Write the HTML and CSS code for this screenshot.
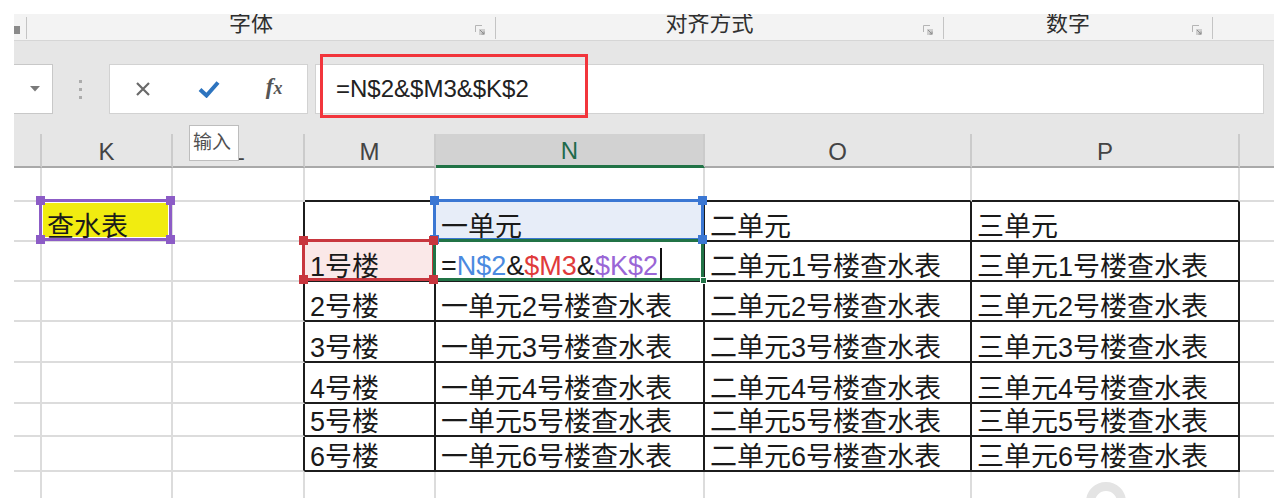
FILE: index.html
```html
<!DOCTYPE html>
<html lang="zh-CN">
<head>
<meta charset="utf-8">
<title>Excel</title>
<link rel="stylesheet" href="styles.css">
</head>
<body>
<div class="app">
  <div class="ribbon">
    <div class="rg g0">
      <span class="mini"></span>
      <span class="sep"></span>
    </div>
    <div class="rg g1">
      <span class="rlabel">字体</span>
      <svg class="launch" viewBox="0 0 10 10" width="10" height="10"><path d="M0.5 7V0.5H7" fill="none" stroke="#b5b5b5"/><rect x="4" y="4" width="6" height="6" fill="#cfcfcf"/><path d="M5 5l4 4M9 6.5V9H6.5" fill="none" stroke="#8e8e8e"/></svg>
      <span class="sep"></span>
    </div>
    <div class="rg g2">
      <span class="rlabel">对齐方式</span>
      <svg class="launch" viewBox="0 0 10 10" width="10" height="10"><path d="M0.5 7V0.5H7" fill="none" stroke="#b5b5b5"/><rect x="4" y="4" width="6" height="6" fill="#cfcfcf"/><path d="M5 5l4 4M9 6.5V9H6.5" fill="none" stroke="#8e8e8e"/></svg>
      <span class="sep"></span>
    </div>
    <div class="rg g3">
      <span class="rlabel">数字</span>
      <svg class="launch" viewBox="0 0 10 10" width="10" height="10"><path d="M0.5 7V0.5H7" fill="none" stroke="#b5b5b5"/><rect x="4" y="4" width="6" height="6" fill="#cfcfcf"/><path d="M5 5l4 4M9 6.5V9H6.5" fill="none" stroke="#8e8e8e"/></svg>
      <span class="sep"></span>
    </div>
  </div>

  <div class="fbar">
    <div class="namebox">
      <svg viewBox="0 0 10 6" width="10" height="6"><path d="M0 0h10L5 5.5z" fill="#7a7a7a"/></svg>
    </div>
    <div class="grip"><i></i><i></i><i></i></div>
    <div class="fbtns">
      <span class="slot">
        <svg viewBox="0 0 16 16" width="16" height="16"><path d="M2 2L14 14M14 2L2 14" stroke="#6a6a6a" stroke-width="2.2" fill="none"/></svg>
      </span>
      <span class="slot">
        <svg viewBox="0 0 22 18" width="22" height="18"><path d="M2 9.5L8.5 15.5L20 2.5" stroke="#2d74bf" stroke-width="4" fill="none"/></svg>
      </span>
      <span class="slot fx">f<span class="fxx">x</span></span>
    </div>
    <div class="finput">=N$2&amp;$M3&amp;$K$2</div>
  </div>

  <div class="hdr">
    <div class="hc"></div>
    <div class="hc">K</div>
    <div class="hc">L</div>
    <div class="hc">M</div>
    <div class="hc sel">N</div>
    <div class="hc">O</div>
    <div class="hc">P</div>
    <div class="hc last"></div>
  </div>

  <div class="grid">
    <!-- row 1 -->
    <div class="c"></div><div class="c"></div><div class="c"></div>
    <div class="c tt"></div><div class="c tt"></div><div class="c tt"></div><div class="c tt"></div>
    <div class="c last"></div>

    <!-- row 2 -->
    <div class="c"></div>
    <div class="c rel"><div class="hl hl-purple"><b class="h tl"></b><b class="h tr"></b><b class="h bl"></b><b class="h br"></b></div><span class="tx">查水表</span></div>
    <div class="c tl"></div>
    <div class="c t"></div>
    <div class="c t rel"><div class="hl hl-blue"><b class="h tl"></b><b class="h tr"></b><b class="h bl"></b><b class="h br"></b></div><span class="tx">一单元</span></div>
    <div class="c t">二单元</div>
    <div class="c t">三单元</div>
    <div class="c last"></div>

    <!-- row 3 -->
    <div class="c"></div><div class="c"></div>
    <div class="c tl"></div>
    <div class="c t rel"><div class="hl hl-red"><b class="h tl"></b><b class="h tr"></b><b class="h bl"></b><b class="h br"></b></div><span class="tx">1号楼</span></div>
    <div class="c t rel"><div class="hl hl-green"><b class="fillh"></b></div><span class="tx">=<span class="r-blue">N$2</span>&amp;<span class="r-red">$M3</span>&amp;<span class="r-purple">$K$2</span><span class="caret"></span></span></div>
    <div class="c t">二单元1号楼查水表</div>
    <div class="c t">三单元1号楼查水表</div>
    <div class="c last"></div>

    <!-- row 4 -->
    <div class="c"></div><div class="c"></div><div class="c tl"></div>
    <div class="c t">2号楼</div><div class="c t">一单元2号楼查水表</div><div class="c t">二单元2号楼查水表</div><div class="c t">三单元2号楼查水表</div>
    <div class="c last"></div>

    <!-- row 5 -->
    <div class="c"></div><div class="c"></div><div class="c tl"></div>
    <div class="c t">3号楼</div><div class="c t">一单元3号楼查水表</div><div class="c t">二单元3号楼查水表</div><div class="c t">三单元3号楼查水表</div>
    <div class="c last"></div>

    <!-- row 6 -->
    <div class="c"></div><div class="c"></div><div class="c tl"></div>
    <div class="c t">4号楼</div><div class="c t">一单元4号楼查水表</div><div class="c t">二单元4号楼查水表</div><div class="c t">三单元4号楼查水表</div>
    <div class="c last"></div>

    <!-- row 7 -->
    <div class="c"></div><div class="c"></div><div class="c tl"></div>
    <div class="c t">5号楼</div><div class="c t">一单元5号楼查水表</div><div class="c t">二单元5号楼查水表</div><div class="c t">三单元5号楼查水表</div>
    <div class="c last"></div>

    <!-- row 8 -->
    <div class="c"></div><div class="c"></div><div class="c tl"></div>
    <div class="c t">6号楼</div><div class="c t">一单元6号楼查水表</div><div class="c t">二单元6号楼查水表</div><div class="c t">三单元6号楼查水表</div>
    <div class="c last"></div>

    <!-- row 9 -->
    <div class="c"></div><div class="c"></div><div class="c"></div><div class="c"></div>
    <div class="c"></div><div class="c"></div><div class="c"></div><div class="c last"></div>
  </div>

  <div class="tip">输入</div>
  <div class="redbox"></div>
  <div class="wmark"></div>
</div>
</body>
</html>
```

FILE: styles.css
```css
* { box-sizing: border-box; margin: 0; padding: 0; }

html, body {
  width: 1274px;
  height: 498px;
  overflow: hidden;
  background: #ffffff;
}

body {
  font-family: "Liberation Sans", "Noto Sans CJK SC", sans-serif;
  color: #1d1d1d;
}

.app {
  position: relative;
  height: 498px;
  padding: 14px 0 0 14px;
}

/* ---------- ribbon group labels ---------- */
.ribbon {
  display: flex;
  height: 27px;
  background: #f3f3f3;
  border-bottom: 1px solid #d6d6d6;
  overflow: hidden;
}

.rg {
  display: flex;
  align-items: flex-start;
}

.g0 { width: 13px; }
.g1 { width: 469px; }
.g2 { width: 448px; }
.g3 { width: 269px; }

.mini {
  width: 6px;
  height: 8px;
  margin-top: 12px;
  background: #8a8a8a;
}

.rlabel {
  flex: 1;
  text-align: center;
  font-family: "Noto Sans CJK SC", sans-serif;
  font-size: 22px;
  line-height: 22px;
  margin-top: -4px;
  color: #2f2f2f;
}

.launch {
  margin-top: 11px;
  margin-right: 10px;
  flex: none;
}

.sep {
  width: 1px;
  height: 22px;
  margin-top: 3px;
  margin-left: auto;
  background: #c4c4c4;
  flex: none;
}

.g1 .sep, .g2 .sep, .g3 .sep { margin-left: 0; }

/* ---------- formula bar ---------- */
.fbar {
  display: flex;
  align-items: flex-start;
  height: 93px;
  padding-top: 23px;
  background: #e6e6e6;
}

.namebox {
  width: 39px;
  height: 50px;
  background: #ffffff;
  border: 1px solid #c8c8c8;
  border-left: none;
  display: flex;
  align-items: center;
  padding-left: 16px;
}

.grip {
  margin-left: 24px;
  width: 6px;
  height: 50px;
  display: flex;
  flex-direction: column;
  justify-content: center;
  align-items: center;
  gap: 5px;
}

.grip i {
  display: block;
  width: 3px;
  height: 3px;
  background: #acacac;
}

.fbtns {
  margin-left: 26px;
  width: 199px;
  height: 50px;
  background: #ffffff;
  border: 1px solid #d2d2d2;
  display: flex;
  align-items: center;
}

.slot {
  width: 66px;
  height: 48px;
  display: flex;
  align-items: center;
  justify-content: center;
}

.fx {
  font-family: "Liberation Serif", serif;
  font-style: italic;
  font-weight: bold;
  font-size: 23px;
  color: #555555;
  padding-bottom: 4px;
}

.fxx {
  font-size: 18px;
  position: relative;
  top: 1px;
}

.finput {
  flex: 1;
  margin-left: 7px;
  margin-right: 10px;
  height: 50px;
  background: #ffffff;
  border: 1px solid #d2d2d2;
  padding-left: 20px;
  font-size: 24px;
  line-height: 48px;
  color: #222222;
}

/* ---------- column headers ---------- */
.hdr {
  display: grid;
  grid-template-columns: 28px 131px 132px 131px 269px 267px 268px 1fr;
  height: 34px;
  background: #e6e6e6;
}

.hc {
  border-right: 2px solid #cbcbcb;
  border-bottom: 2px solid #a9a9a9;
  display: flex;
  align-items: center;
  justify-content: center;
  padding-top: 3px;
  font-size: 24px;
  color: #444444;
}

.hc.sel {
  background: #d2d2d2;
  border-bottom: 3px solid #217346;
  color: #1f6b4c;
}

.hc.last { border-right: none; }

/* ---------- sheet grid ---------- */
.grid {
  display: grid;
  grid-template-columns: 28px 131px 132px 131px 269px 267px 268px 1fr;
  grid-template-rows: 34px 40px 40px 40px 41px 41px 33px 35px 40px;
  background: #ffffff;
}

.c {
  border-right: 2px solid #dcdcdc;
  border-bottom: 2px solid #dcdcdc;
  display: flex;
  align-items: flex-end;
  padding: 0 0 0 5px;
  font-size: 27px;
  line-height: 26px;
  white-space: nowrap;
  color: #1a1a1a;
}

.c.last { border-right: none; }

.c.tt { border-bottom-color: #1c1c1c; }
.c.tl { border-right-color: #1c1c1c; }
.c.t { border-right-color: #1c1c1c; border-bottom-color: #1c1c1c; }

.rel { position: relative; }

.tx {
  position: relative;
  z-index: 5;
}

/* reference highlights */
.hl {
  position: absolute;
  left: -3px;
  top: -3px;
  right: -1px;
  bottom: -1px;
  border: 3px solid;
}

.hl-purple {
  border-color: #8c5cc6;
  background: #f1ec10;
  box-shadow: inset 0 0 0 1px #ffffff;
}

.hl-blue {
  border-color: #3b77d3;
  background: #e7edf8;
}

.hl-red {
  border-color: #c8363e;
  background: #fae8e8;
}

.hl-green {
  border-color: #217346;
  background: #ffffff;
  z-index: 2;
}

.h {
  position: absolute;
  width: 9px;
  height: 9px;
  z-index: 3;
}

.hl-purple .h { background: #8c5cc6; }
.hl-blue .h { background: #3b77d3; }
.hl-red .h { background: #c8363e; }

.h.tl { left: -6px; top: -6px; }
.h.tr { right: -6px; top: -6px; }
.h.bl { left: -6px; bottom: -6px; }
.h.br { right: -6px; bottom: -6px; }

.fillh {
  position: absolute;
  right: -6px;
  bottom: -6px;
  width: 7px;
  height: 7px;
  background: #217346;
  border: 1px solid #ffffff;
}

.r-blue { color: #4a8ae0; }
.r-red { color: #e03a3a; }
.r-purple { color: #9a66d6; }

.caret {
  display: inline-block;
  width: 2px;
  height: 32px;
  margin-left: 2px;
  background: #111111;
  vertical-align: -5px;
}

/* ---------- overlays ---------- */
.tip {
  position: absolute;
  left: 189px;
  top: 125px;
  width: 50px;
  height: 36px;
  background: #ffffff;
  border: 1px solid #bdbdbd;
  font-family: "Noto Sans CJK SC", sans-serif;
  font-size: 19px;
  line-height: 22px;
  color: #505050;
  padding: 4px 0 0 3px;
  z-index: 10;
}

.redbox {
  position: absolute;
  left: 320px;
  top: 54px;
  width: 268px;
  height: 64px;
  border: 3px solid #f2353c;
  z-index: 10;
}

.wmark {
  position: absolute;
  left: 1086px;
  top: 482px;
  width: 40px;
  height: 40px;
  border-radius: 50%;
  border: 9px solid #e4e4e4;
  z-index: 10;
}
```
